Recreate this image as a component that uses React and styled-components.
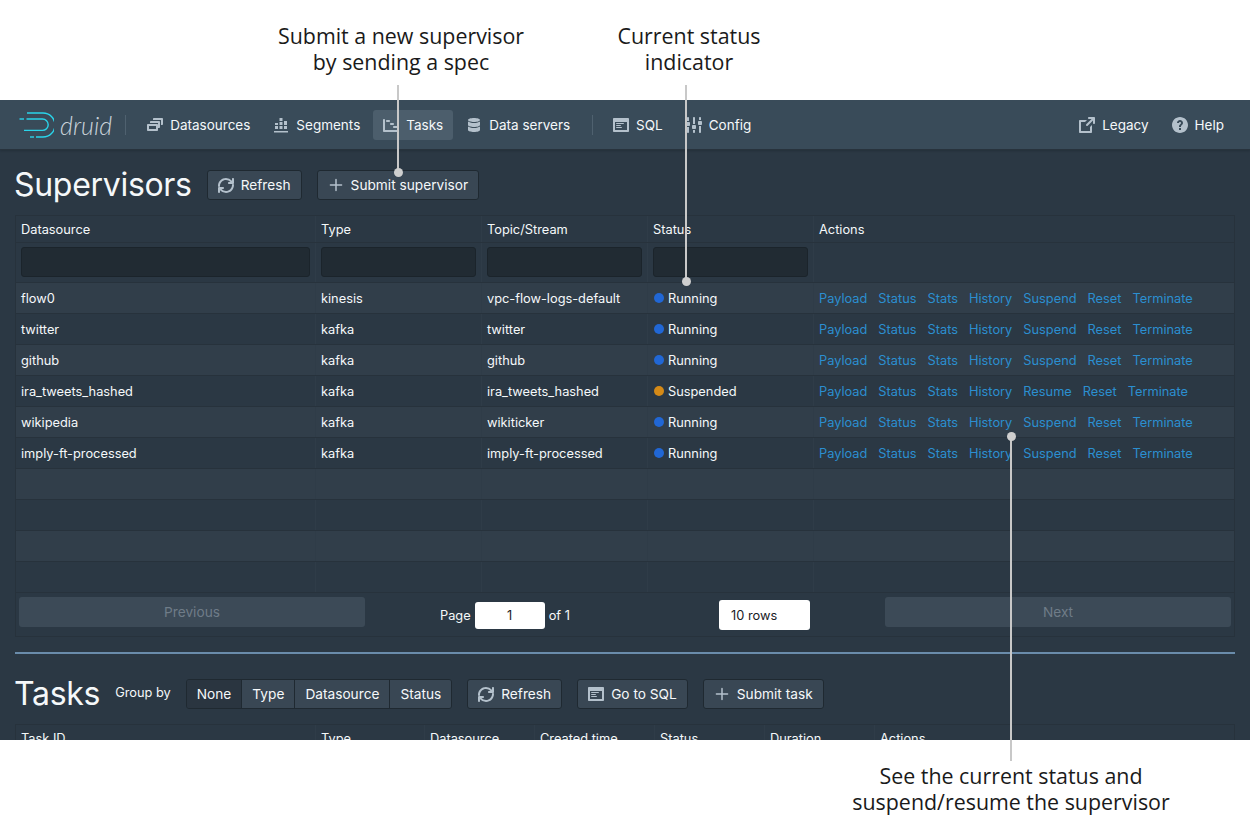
import React from 'react';
import styled, { createGlobalStyle } from 'styled-components';

const Global = createGlobalStyle`
  html, body { margin: 0; padding: 0; background: #fff; }
  body { font-family: Inter, "Liberation Sans", sans-serif; }
`;

const P = {
  multi: 'M12 3.98H4c-.55 0-1 .45-1 1v1h8v5h1c.55 0 1-.45 1-1v-5c0-.55-.45-1-1-1zm3-3H7c-.55 0-1 .45-1 1v1h8v5h1c.55 0 1-.45 1-1v-5c0-.55-.45-1-1-1zm-5 6H1c-.55 0-1 .45-1 1v5c0 .55.45 1 1 1h9c.55 0 1-.45 1-1v-5c0-.55-.45-1-1-1zm-1 5H2v-3h7v3z',
  stacked: 'M2 6h3v2H2zM2 9h3v3H2zM6.5 1h3v3h-3zM6.5 5h3v3h-3zM6.5 9h3v3h-3zM11 4h3v4h-3zM11 9h3v3h-3zM1 14h14v1.5H1z',
  gantt: 'M10 10c0 .55.45 1 1 1h4c.55 0 1-.45 1-1s-.45-1-1-1h-4c-.55 0-1 .45-1 1zM7 7c0 .55.45 1 1 1h2c.55 0 1-.45 1-1s-.45-1-1-1H8c-.55 0-1 .45-1 1zm8 6H2V3c0-.55-.45-1-1-1s-1 .45-1 1v11c0 .55.45 1 1 1h14c.55 0 1-.45 1-1s-.45-1-1-1zM4 5h2c.55 0 1-.45 1-1s-.45-1-1-1H4c-.55 0-1 .45-1 1s.45 1 1 1z',
  database: 'M8 4.98c3.31 0 6-.9 6-2s-2.69-2-6-2-6 .9-6 2 2.69 2 6 2zm-6-.5v3.5c0 1.1 2.69 2 6 2s6-.9 6-2v-3.5c-1.1.9-3.4 1.5-6 1.5s-4.9-.6-6-1.5zm0 5v3.5c0 1.1 2.69 2 6 2s6-.9 6-2v-3.5c-1.1.9-3.4 1.5-6 1.5s-4.9-.6-6-1.5z',
  application: 'M3.5 7h7c.28 0 .5-.22.5-.5s-.22-.5-.5-.5h-7c-.28 0-.5.22-.5.5s.22.5.5.5zM15 1H1c-.55 0-1 .45-1 1v12c0 .55.45 1 1 1h14c.55 0 1-.45 1-1V2c0-.55-.45-1-1-1zm-1 12H2V5h12v8zM3.5 9h4c.28 0 .5-.22.5-.5S7.78 8 7.5 8h-4c-.28 0-.5.22-.5.5s.22.5.5.5zm0 2h5c.28 0 .5-.22.5-.5s-.22-.5-.5-.5h-5c-.28 0-.5.22-.5.5s.22.5.5.5z',
  settings: 'M3 1c0-.55-.45-1-1-1S1 .45 1 1v3h2V1zm0 4H1c-.55 0-1 .45-1 1v2c0 .55.45 1 1 1h2c.55 0 1-.45 1-1V6c0-.55-.45-1-1-1zm12-4c0-.55-.45-1-1-1s-1 .45-1 1v2h2V1zM9 1c0-.55-.45-1-1-1S7 .45 7 1v6h2V1zM1 15c0 .55.45 1 1 1s1-.45 1-1v-5H1v5zM15 4h-2c-.55 0-1 .45-1 1v2c0 .55.45 1 1 1h2c.55 0 1-.45 1-1V5c0-.55-.45-1-1-1zm-2 11c0 .55.45 1 1 1s1-.45 1-1V9h-2v6zm-4-7H7c-.55 0-1 .45-1 1v2c0 .55.45 1 1 1h2c.55 0 1-.45 1-1V9c0-.55-.45-1-1-1zm-2 7c0 .55.45 1 1 1s1-.45 1-1v-2H7v2z',
  share: 'M10.99 13.99h-9v-9h4.04l2-2H1c-.55 0-1 .45-1 1v11c0 .55.45 1 1 1h11c.55 0 1-.45 1-1V7.95l-2 2v4.04zM15 0h-5c-.55 0-1 .45-1 1s.45 1 1 1h2.59L7.29 7.3a1.003 1.003 0 001.42 1.42L14 3.41V6c0 .55.45 1 1 1s1-.45 1-1V1c0-.55-.45-1-1-1z',
  help: 'M8 0C3.58 0 0 3.58 0 8s3.58 8 8 8 8-3.58 8-8-3.58-8-8-8zM7 13v-2h2v2H7zm1-10C6.34 3 5 4.34 5 6h2c0-.55.45-1 1-1s1 .45 1 1c0 .28-.11.53-.29.71L7.5 7.91c-.31.32-.5.76-.5 1.25V10h2v-.66c0-.33.13-.66.41-.93l1-1c.37-.37.59-.88.59-1.41C11 4.34 9.66 3 8 3z',
  refresh: 'M14.99 6.99c-.55 0-1 .45-1 1 0 3.31-2.69 6-6 6-1.77 0-3.36-.78-4.46-2h1.46c.55 0 1-.45 1-1s-.45-1-1-1h-4c-.55 0-1 .45-1 1v4c0 .55.45 1 1 1s1-.45 1-1v-1.73a7.97 7.97 0 006 2.73c4.42 0 8-3.58 8-8 0-.55-.45-1-1-1zm0-6c-.55 0-1 .45-1 1v1.73a7.97 7.97 0 00-6-2.73c-4.42 0-8 3.58-8 8 0 .55.45 1 1 1s1-.45 1-1c0-3.31 2.69-6 6-6 1.77 0 3.36.78 4.46 2h-1.46c-.55 0-1 .45-1 1s.45 1 1 1h4c.55 0 1-.45 1-1v-4c0-.55-.45-1-1-1z',
  plus: 'M13.6 7.25H8.75V2.4c0-.41-.34-.75-.75-.75s-.75.34-.75.75v4.85H2.4c-.41 0-.75.34-.75.75s.34.75.75.75h4.85v4.85c0 .41.34.75.75.75s.75-.34.75-.75V8.75h4.85c.41 0 .75-.34.75-.75s-.34-.75-.75-.75z',
};

const Svg = styled.svg`
  width: 16px;
  height: 16px;
  flex: none;
  fill: #b4c1cc;
`;
const Icon = ({ name }) => (
  <Svg viewBox="0 0 16 16"><path fillRule="evenodd" d={P[name]} /></Svg>
);

const Page = styled.div`
  position: relative;
  width: 1250px;
  height: 840px;
  overflow: hidden;
  background: #fff;
`;
const Spacer = styled.div`
  height: 100px;
`;
const Console = styled.div`
  height: 640px;
  overflow: hidden;
  background: #2b3844;
  color: #f5f8fa;
  font-size: 13.7px;
`;
const Nav = styled.nav`
  height: 50px;
  box-sizing: border-box;
  display: flex;
  align-items: center;
  padding: 0 16px 0 19px;
  background: #394b59;
  border-bottom: 1px solid #28333d;
  box-shadow: 0 1px 2px rgba(16, 22, 26, 0.25);
`;
const Logo = styled.div`
  display: flex;
  align-items: center;
  gap: 6px;
`;
const LogoText = styled.span`
  font-family: Lato, sans-serif;
  font-weight: 300;
  font-style: italic;
  font-size: 25px;
  color: #c9d3db;
  line-height: 30px;
`;
const NavDivider = styled.span`
  width: 1px;
  height: 20px;
  background: #4f616f;
  margin: 0 ${p => p.$right || 11}px 0 ${p => p.$left || 13}px;
`;
const NavGroup = styled.div`
  display: flex;
  align-items: center;
  gap: 3px;
`;
const NavButton = styled.div`
  height: 30px;
  display: flex;
  align-items: center;
  gap: 7px;
  padding: 0 10px;
  border-radius: 3px;
  background: ${p => (p.$active ? '#4c5e6c' : 'transparent')};
  white-space: nowrap;
  font-size: 13.5px;
`;
const NavPush = styled.div`
  flex: 1;
`;
const Content = styled.main`
  padding: 20px 15px 0;
`;
const HeadRow = styled.div`
  display: flex;
  align-items: center;
  height: 30px;
  gap: 15px;
`;
const Title = styled.h1`
  margin: 0 0 0 -1px;
  font-weight: 400;
  font-size: 32px;
  line-height: 30px;
  letter-spacing: -0.3px;
  color: #f5f8fa;
`;
const Btn = styled.div`
  height: 30px;
  box-sizing: border-box;
  display: flex;
  align-items: center;
  gap: 7px;
  padding: 0 10px;
  background: #394754;
  border: 1px solid #1f2931;
  border-radius: 3px;
  white-space: nowrap;
`;
const GroupLabel = styled.span`
  font-size: 12.8px;
  margin: -4px 0 0 0;
`;
const ButtonGroup = styled.div`
  display: flex;
  height: 30px;
  box-sizing: border-box;
  border: 1px solid #1f2931;
  border-radius: 3px;
  overflow: hidden;
`;
const GroupItem = styled.div`
  display: flex;
  align-items: center;
  padding: 0 10px;
  background: ${p => (p.$active ? '#2a3540' : '#394754')};
  & + & { border-left: 1px solid #1f2931; }
`;
const Table = styled.div`
  margin-top: 15px;
  border: 1px solid #27323c;
  font-size: 12.8px;
`;
const Row = styled.div`
  display: grid;
  grid-template-columns: ${p => p.$cols};
  height: ${p => p.$h || 31}px;
  box-sizing: border-box;
  align-items: stretch;
  background: ${p => (p.$odd ? '#313e4a' : 'transparent')};
  border-bottom: 1px solid #27323c;
`;
const Cell = styled.div`
  display: flex;
  align-items: center;
  padding: 0 5px;
  border-left: ${p => (p.$first ? 'none' : '1px solid #2f3c48')};
  white-space: nowrap;
  overflow: hidden;
`;
const FilterCell = styled(Cell)`
  align-items: flex-start;
  padding-top: 4px;
`;
const FilterInput = styled.div`
  width: 100%;
  height: 30px;
  box-sizing: border-box;
  background: #212b33;
  border: 1px solid #1b242b;
  border-radius: 3px;
`;
const Dot = styled.span`
  width: 10px;
  height: 10px;
  border-radius: 50%;
  margin: 0 4px 0 1px;
  background: ${p => p.$color};
`;
const Actions = styled.div`
  display: flex;
  gap: 11px;
  color: #2b8fd0;
`;
const Pagination = styled.div`
  height: 43px;
  box-sizing: border-box;
  display: grid;
  grid-template-columns: 346px 354px 166px 1fr;
  align-items: start;
  padding: 4px 3px 0;
`;
const PageBtn = styled.div`
  height: 30px;
  display: flex;
  align-items: center;
  justify-content: center;
  background: #3c4a57;
  border-radius: 3px;
  color: #6f7c88;
  font-size: 13.7px;
`;
const PageCenter = styled.div`
  display: flex;
  align-items: center;
  height: 30px;
  margin: 3px 0 0 75px;
  gap: 4px;
`;
const PageInput = styled.div`
  width: 70px;
  height: 27px;
  display: flex;
  align-items: center;
  justify-content: center;
  background: #fff;
  border-radius: 3px;
  color: #182026;
`;
const RowsSelect = styled.div`
  width: 91px;
  height: 30px;
  margin-top: 3px;
  display: flex;
  align-items: center;
  box-sizing: border-box;
  padding-left: 12px;
  background: #fff;
  border-radius: 3px;
  color: #182026;
`;
const Rule = styled.hr`
  margin: 15px 0 25px;
  height: 2px;
  border: 0;
  background: #6a8cab;
`;

/* annotations lying over the screenshot */
const Note = styled.div`
  position: absolute;
  left: ${p => p.$x}px;
  top: ${p => p.$y}px;
  transform: translateX(-50%);
  font-family: "Open Sans", sans-serif;
  font-size: 21.4px;
  line-height: 26px;
  color: #1a1a1a;
  text-align: center;
  white-space: nowrap;
`;
const Leader = styled.div`
  position: absolute;
  left: ${p => p.$x}px;
  top: ${p => p.$top}px;
  height: ${p => p.$h}px;
  width: 2px;
  background: #c8c8c8;
`;
const LeaderDot = styled.div`
  position: absolute;
  left: ${p => p.$x - 3.5}px;
  top: ${p => p.$y}px;
  width: 9px;
  height: 9px;
  border-radius: 50%;
  background: #cfcfcf;
`;

const COLS = '299px 166px 166px 166px 1fr';
const TASK_COLS = '299px 109px 110px 120px 110px 110px 1fr';
const rows = [
  ['flow0', 'kinesis', 'vpc-flow-logs-default', 'Running'],
  ['twitter', 'kafka', 'twitter', 'Running'],
  ['github', 'kafka', 'github', 'Running'],
  ['ira_tweets_hashed', 'kafka', 'ira_tweets_hashed', 'Suspended'],
  ['wikipedia', 'kafka', 'wikiticker', 'Running'],
  ['imply-ft-processed', 'kafka', 'imply-ft-processed', 'Running'],
  null, null, null, null,
];
const navLeft = [
  ['multi', 'Datasources'],
  ['stacked', 'Segments'],
  ['gantt', 'Tasks', true],
  ['database', 'Data servers'],
];

export default function App() {
  return (
    <Page>
      <Global />
      <Spacer />
      <Console>
        <Nav>
          <Logo>
            <svg width="35" height="26" viewBox="0 0 35 26" fill="none" stroke="#2ad5ea" strokeWidth="1.4">
              <path d="M8 1H24A12 12 0 0 1 24 25H17" />
              <path d="M11 25h4" />
              <path d="M.5 7H5" />
              <path d="M7.5 7H23.5A5.7 5.7 0 0 1 23.5 18.4H5" />
            </svg>
            <LogoText>druid</LogoText>
          </Logo>
          <NavDivider />
          <NavGroup>
            {navLeft.map(([ic, t, a]) => (
              <NavButton key={t} $active={a}><Icon name={ic} />{t}</NavButton>
            ))}
          </NavGroup>
          <NavDivider $left={12} $right={10} />
          <NavGroup>
            <NavButton><Icon name="application" />SQL</NavButton>
            <NavButton><Icon name="settings" />Config</NavButton>
          </NavGroup>
          <NavPush />
          <NavGroup>
            <NavButton><Icon name="share" />Legacy</NavButton>
            <NavButton><Icon name="help" />Help</NavButton>
          </NavGroup>
        </Nav>
        <Content>
          <HeadRow>
            <Title>Supervisors</Title>
            <Btn><Icon name="refresh" />Refresh</Btn>
            <Btn><Icon name="plus" />Submit supervisor</Btn>
          </HeadRow>
          <Table>
            <Row $cols={COLS} $h={27}>
              {['Datasource', 'Type', 'Topic/Stream', 'Status', 'Actions'].map((h, i) => (
                <Cell key={h} $first={i === 0}>{h}</Cell>
              ))}
            </Row>
            <Row $cols={COLS} $h={40}>
              {[0, 1, 2, 3].map(i => (
                <FilterCell key={i} $first={i === 0}><FilterInput /></FilterCell>
              ))}
              <Cell />
            </Row>
            {rows.map((r, i) => (
              <Row key={i} $cols={COLS} $odd={i % 2 === 0}>
                <Cell $first>{r && r[0]}</Cell>
                <Cell>{r && r[1]}</Cell>
                <Cell>{r && r[2]}</Cell>
                <Cell>
                  {r && <Dot $color={r[3] === 'Running' ? '#2167d5' : '#d58a17'} />}
                  {r && r[3]}
                </Cell>
                <Cell>
                  {r && (
                    <Actions>
                      {['Payload', 'Status', 'Stats', 'History', r[3] === 'Running' ? 'Suspend' : 'Resume', 'Reset', 'Terminate'].map(a => (
                        <span key={a}>{a}</span>
                      ))}
                    </Actions>
                  )}
                </Cell>
              </Row>
            ))}
            <Pagination>
              <PageBtn>Previous</PageBtn>
              <PageCenter>Page <PageInput>1</PageInput> of 1</PageCenter>
              <RowsSelect>10 rows</RowsSelect>
              <PageBtn>Next</PageBtn>
            </Pagination>
          </Table>
          <Rule />
          <HeadRow>
            <Title>Tasks</Title>
            <GroupLabel>Group by</GroupLabel>
            <ButtonGroup>
              <GroupItem $active>None</GroupItem>
              <GroupItem>Type</GroupItem>
              <GroupItem>Datasource</GroupItem>
              <GroupItem>Status</GroupItem>
            </ButtonGroup>
            <Btn><Icon name="refresh" />Refresh</Btn>
            <Btn><Icon name="application" />Go to SQL</Btn>
            <Btn><Icon name="plus" />Submit task</Btn>
          </HeadRow>
          <Table>
            <Row $cols={TASK_COLS} $h={28}>
              {['Task ID', 'Type', 'Datasource', 'Created time', 'Status', 'Duration', 'Actions'].map((h, i) => (
                <Cell key={h} $first={i === 0}>{h}</Cell>
              ))}
            </Row>
          </Table>
        </Content>
      </Console>
      <Note $x={401} $y={23}>Submit a new supervisor<br />by sending a spec</Note>
      <Note $x={689} $y={23}>Current status<br />indicator</Note>
      <Note $x={1011} $y={763}>See the current status and<br />suspend/resume the supervisor</Note>
      <Leader $x={397} $top={85} $h={87} />
      <LeaderDot $x={397} $y={168} />
      <Leader $x={685} $top={85} $h={196} />
      <LeaderDot $x={685} $y={277} />
      <Leader $x={1010} $top={436} $h={325} />
      <LeaderDot $x={1010} $y={432} />
    </Page>
  );
}
